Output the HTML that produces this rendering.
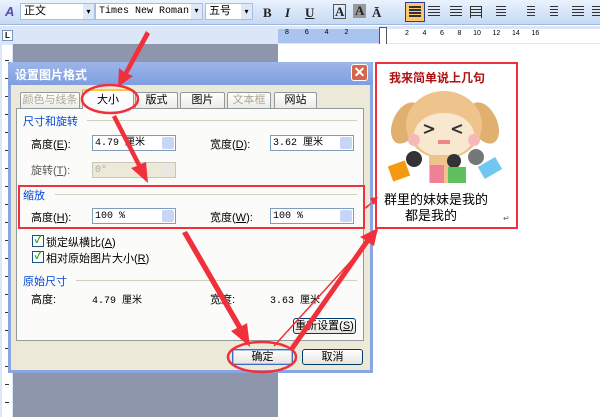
<!DOCTYPE html>
<html><head><meta charset="utf-8"><style>
*{margin:0;padding:0;box-sizing:border-box}
body{width:600px;height:417px;overflow:hidden;position:relative;background:#fff;font-family:"Liberation Sans","Noto Sans CJK SC",sans-serif;font-size:11px;color:#000}
.a{position:absolute}
.tb{left:0;top:0;width:600px;height:25px;background:linear-gradient(#eaf2fd,#c6d9f4);border-bottom:1px solid #9fb8dc}
.dd{background:#fff;border:1px solid #a9bfe0;height:17px;top:3px;font-size:11px;line-height:15px;padding-left:3px}
.dd:after{content:"▾";position:absolute;right:0;top:0;width:11px;height:15px;background:#dfe8f6;font-size:8px;text-align:center}
.ic{top:5px;font-size:13px;font-weight:bold;color:#222;font-family:"Liberation Serif",serif}
.lbl{font-size:11px}
.inp{background:#fff;border:1px solid #7f9db9;height:16px;font-size:10px;line-height:15px;padding-left:2px;font-family:"Liberation Mono","Noto Sans CJK SC",monospace}
.sp{position:absolute;right:1px;top:1px;width:12px;height:12px;background:#c6d6f6;border-radius:2px}
.btn{background:linear-gradient(#fff,#e6e4dc);border:1px solid #003c74;border-radius:3px;text-align:center;font-size:11px;line-height:14px;height:16px}
.sec{color:#0046d5;font-size:11px}
.ln{height:1px;background:#d0d0bf}
.cb{width:12px;height:12px;border:1px solid #1c5180;background:#fff;color:#21a121;font-size:10px;line-height:10px;text-align:center;font-weight:bold}
.tab{top:92px;height:16px;background:linear-gradient(#fff,#ecebe6);border:1px solid #919b9c;border-bottom:none;text-align:center;font-size:11px;line-height:15px;border-radius:2px 2px 0 0}
.al{position:absolute;top:6px;width:12px;height:12px;background:repeating-linear-gradient(#333 0 1px,transparent 1px 3px)}
</style></head><body>
<div class="a tb"></div>
<div class="a" style="left:5px;top:4px;font-size:13px;color:#5a4ab0;font-style:italic;font-weight:bold">A</div>
<div class="a dd" style="left:20px;width:75px">正文</div>
<div class="a dd" style="left:95px;width:108px;font-family:'Liberation Mono',monospace;font-size:10px">Times New Roman</div>
<div class="a dd" style="left:205px;width:48px">五号</div>
<div class="a ic" style="left:263px">B</div>
<div class="a ic" style="left:285px;font-style:italic">I</div>
<div class="a ic" style="left:305px;text-decoration:underline">U</div>
<div class="a ic" style="left:333px;border:1px solid #555;padding:0 1px;line-height:13px;top:4px">A</div>
<div class="a ic" style="left:353px;background:#999;padding:0 2px;line-height:14px;top:4px">A</div>
<div class="a ic" style="left:372px">Ā</div>
<div class="a" style="left:405px;top:2px;width:20px;height:20px;background:#fcc771;border:1px solid #2b3f8c"></div>
<div class="al" style="left:409px;background:repeating-linear-gradient(#333 0 2px,transparent 2px 3px)"></div>
<div class="al" style="left:428px"></div>
<div class="al" style="left:450px"></div>
<div class="al" style="left:470px;border-left:1px solid #333;border-right:1px solid #333"></div>
<div class="al" style="left:494px;width:10px;left:496px"></div>
<div class="al" style="left:525px;width:8px;left:527px"></div>
<div class="al" style="left:548px;width:8px;left:550px"></div>
<div class="al" style="left:572px"></div>
<div class="al" style="left:592px"></div>
<!-- ruler -->
<div class="a" style="left:0;top:26px;width:600px;height:18px;background:#dbe6f7"></div>
<div class="a" style="left:2px;top:30px;width:11px;height:11px;border:1px solid #7a96c0;background:#fff;font-size:8px;line-height:9px;text-align:center;font-weight:bold">L</div>
<div class="a" style="left:278px;top:29px;width:105px;height:14px;background:#a9c4ef"></div>
<div class="a" style="left:383px;top:29px;width:217px;height:14px;background:#fff"></div>
<div class="a" style="left:285px;top:29px;font-size:7px;word-spacing:14px">8 6 4 2</div>
<div class="a" style="left:405px;top:30px;font-size:7px;white-space:pre">2       4       6       8      10      12      14      16</div>
<div class="a" style="left:379px;top:27px;width:8px;height:18px;border:1px solid #555;background:#fff"></div>
<div class="a" style="left:382px;top:44px;width:1px;height:20px;background:#888"></div>
<!-- left ruler -->
<div class="a" style="left:0;top:44px;width:13px;height:373px;background:#dbe6f7"></div>
<div class="a" style="left:2px;top:45px;width:10px;height:372px;background:#fff"></div>
<div class="a" style="left:5px;top:50px;width:4px;height:367px;background:repeating-linear-gradient(transparent 0 10px,#333 10px 11px,transparent 11px 18px)"></div>
<!-- gray -->
<div class="a" style="left:13px;top:44px;width:265px;height:373px;background:#8d96aa"></div>
<div class="a" style="left:278px;top:44px;width:322px;height:373px;background:#fff"></div>
<!-- image box -->
<div class="a" style="left:375px;top:62px;width:143px;height:167px;border:2px solid #f0303a;background:#fff"></div>
<div class="a" style="left:389px;top:69px;font-size:12px;font-weight:bold;color:#b01010">我来简单说上几句</div>
<svg class="a" style="left:384px;top:85px" width="126" height="100">
<ellipse cx="22" cy="38" rx="13" ry="22" fill="#e0b070" transform="rotate(25 22 38)"/>
<ellipse cx="100" cy="38" rx="13" ry="22" fill="#e0b070" transform="rotate(-25 100 38)"/>
<ellipse cx="60" cy="40" rx="38" ry="34" fill="#eec48c"/>
<ellipse cx="60" cy="50" rx="30" ry="22" fill="#f8e8d0"/>
<circle cx="30" cy="55" r="6" fill="#f6b8b8"/><circle cx="90" cy="55" r="6" fill="#f6b8b8"/>
<path d="M40 40l10 4M40 48l10-4M78 40l-10 4M78 48l-10-4" stroke="#333" stroke-width="2"/>
<rect x="54" y="55" width="12" height="4" fill="#e88"/>
<rect x="45" y="70" width="30" height="28" fill="#eec48c"/>
<rect x="6" y="78" width="18" height="16" fill="#f39a10" transform="rotate(-20 15 86)"/>
<circle cx="30" cy="74" r="8" fill="#333"/>
<rect x="46" y="80" width="14" height="18" fill="#f08098"/>
<circle cx="70" cy="76" r="7" fill="#333"/>
<rect x="64" y="82" width="18" height="16" fill="#60c060"/>
<circle cx="92" cy="72" r="8" fill="#777"/>
<rect x="96" y="76" width="20" height="14" fill="#70c8f0" transform="rotate(-30 106 83)"/>
</svg>
<div class="a" style="left:384px;top:189px;font-size:13px">群里的妹妹是我的</div>
<div class="a" style="left:405px;top:205px;font-size:13px">都是我的</div>
<div class="a" style="left:503px;top:214px;font-size:8px;color:#666">↵</div>
<!-- dialog -->
<div class="a" style="left:8px;top:62px;width:365px;height:311px;background:#ece9d8;border:3px solid #8aa6e2;border-top:none"></div>
<div class="a" style="left:8px;top:62px;width:365px;height:23px;background:linear-gradient(#9db6ea,#7f9ee0);border-radius:5px 5px 0 0"></div>
<div class="a" style="left:15px;top:66px;font-size:12px;color:#fff;font-weight:bold">设置图片格式</div>
<div class="a" style="left:351px;top:64px;width:17px;height:17px;background:#d5664e;border:1px solid #fff;border-radius:3px;color:#fff;text-align:center;font-size:14px;line-height:15px;font-weight:bold">✕</div>
<div class="a" style="left:16px;top:108px;width:348px;height:233px;background:#fbfbf9;border:1px solid #919b9c"></div>
<div class="a tab" style="left:20px;width:60px;color:#aca899">颜色与线条</div>
<div class="a tab" style="left:82px;width:52px;top:89px;height:20px;background:#fcfcfe;border-top:2px solid #ffc83c;line-height:18px">大小</div>
<div class="a tab" style="left:135px;width:43px">版式</div>
<div class="a tab" style="left:180px;width:45px">图片</div>
<div class="a tab" style="left:227px;width:44px;color:#aca899">文本框</div>
<div class="a tab" style="left:274px;width:43px">网站</div>
<div class="a sec" style="left:23px;top:113px">尺寸和旋转</div><div class="a ln" style="left:87px;top:120px;width:270px"></div>
<div class="a lbl" style="left:31px;top:136px">高度(<u>E</u>):</div>
<div class="a inp" style="left:92px;top:135px;width:84px">4.79 厘米<span class="sp"></span></div>
<div class="a lbl" style="left:210px;top:136px">宽度(<u>D</u>):</div>
<div class="a inp" style="left:270px;top:135px;width:84px">3.62 厘米<span class="sp"></span></div>
<div class="a lbl" style="left:31px;top:162px;color:#555">旋转(<u>T</u>):</div>
<div class="a inp" style="left:92px;top:162px;width:84px;background:#ece9d8;border-color:#c9c7ba;color:#aaa">0°<span class="sp" style="background:#e8e8e2"></span></div>
<div class="a sec" style="left:23px;top:187px">缩放</div><div class="a ln" style="left:55px;top:194px;width:302px"></div>
<div class="a lbl" style="left:31px;top:209px">高度(<u>H</u>):</div>
<div class="a inp" style="left:92px;top:208px;width:84px">100 %<span class="sp"></span></div>
<div class="a lbl" style="left:210px;top:209px">宽度(<u>W</u>):</div>
<div class="a inp" style="left:270px;top:208px;width:84px">100 %<span class="sp"></span></div>
<div class="a" style="left:18px;top:185px;width:347px;height:44px;border:2px solid #f0303a"></div>
<div class="a cb" style="left:32px;top:235px">✓</div><div class="a lbl" style="left:46px;top:234px">锁定纵横比(<u>A</u>)</div>
<div class="a cb" style="left:32px;top:251px">✓</div><div class="a lbl" style="left:46px;top:250px">相对原始图片大小(<u>R</u>)</div>
<div class="a sec" style="left:23px;top:273px">原始尺寸</div><div class="a ln" style="left:76px;top:280px;width:281px"></div>
<div class="a lbl" style="left:31px;top:291px">高度:</div>
<div class="a lbl" style="left:92px;top:291px;font-family:'Liberation Mono','Noto Sans CJK SC',monospace;font-size:10px">4.79 厘米</div>
<div class="a lbl" style="left:210px;top:291px">宽度:</div>
<div class="a lbl" style="left:270px;top:291px;font-family:'Liberation Mono','Noto Sans CJK SC',monospace;font-size:10px">3.63 厘米</div>
<div class="a btn" style="left:293px;top:318px;width:63px">重新设置(<u>S</u>)</div>
<div class="a btn" style="left:232px;top:349px;width:61px;border-color:#3c6bc8;box-shadow:inset 0 0 0 1px #a6c4f4">确定</div>
<div class="a btn" style="left:302px;top:349px;width:61px">取消</div>
<!-- annotations -->
<svg class="a" style="left:0;top:0" width="600" height="417">
<g fill="#f0303a" stroke="#f0303a">
<ellipse cx="110" cy="99" rx="28" ry="14" fill="none" stroke-width="2.5"/>
<ellipse cx="262" cy="357" rx="34" ry="15" fill="none" stroke-width="2.5"/>
<path d="M146 31 L124 72 L119 68 L118 87 L133 76 L128 74 L150 34Z" stroke="none"/>
<path d="M112 117 L137 166 L131 168 L148 183 L146 162 L141 164 L116 115Z" stroke="none"/>
<path d="M182 233 L237 328 L231 331 L250 347 L247 323 L242 326 L187 231Z" stroke="none"/>
<line x1="274" y1="346" x2="372" y2="238" stroke-width="1.5"/>
<path d="M378 230 L366 236 L372 243Z" stroke="none"/>
<path d="M290 347 L365 240 L360 237 L378 228 L374 246 L369 243 L294 350Z" stroke="none"/>
<path d="M365 207 L372 202 L370 198 L378 197 L374 205 L372 203 L366 209Z" stroke="none"/>
</g>
</svg>
</body></html>
